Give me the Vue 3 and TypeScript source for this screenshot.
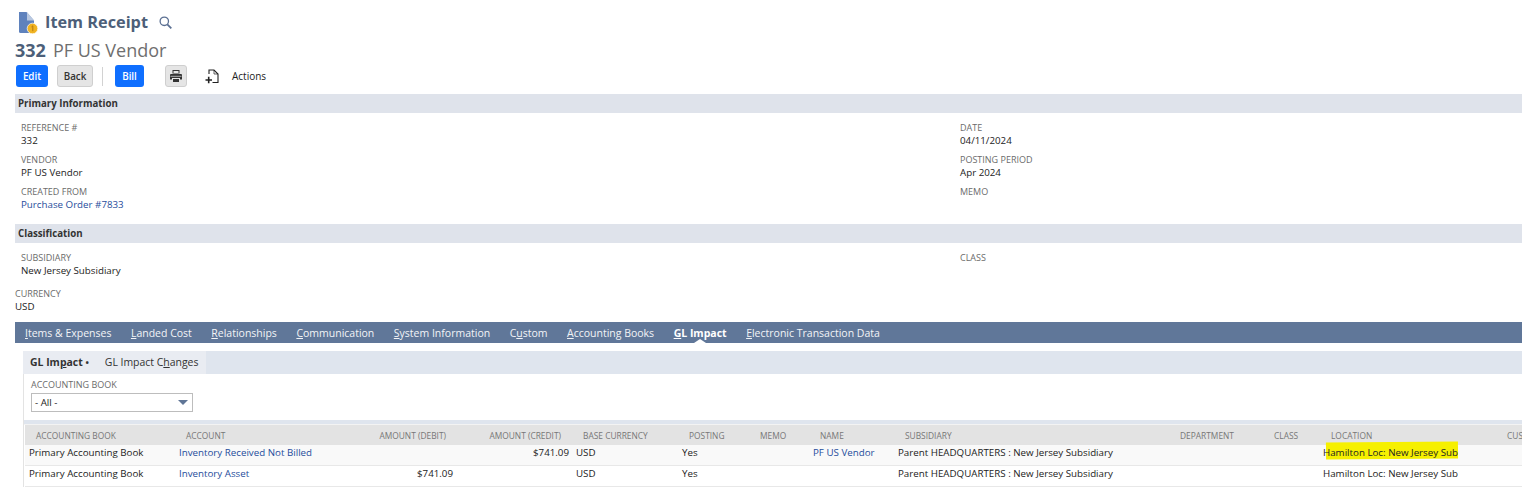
<script setup lang="ts">
interface Tab { before: string; key: string; after: string; active?: boolean }
const tabs: Tab[] = [
  { before: '', key: 'I', after: 'tems & Expenses' },
  { before: '', key: 'L', after: 'anded Cost' },
  { before: '', key: 'R', after: 'elationships' },
  { before: '', key: 'C', after: 'ommunication' },
  { before: '', key: 'S', after: 'ystem Information' },
  { before: 'C', key: 'u', after: 'stom' },
  { before: '', key: 'A', after: 'ccounting Books' },
  { before: '', key: 'G', after: 'L Impact', active: true },
  { before: '', key: 'E', after: 'lectronic Transaction Data' },
]
const headers = ['Accounting Book', 'Account', 'Amount (Debit)', 'Amount (Credit)', 'Base Currency', 'Posting', 'Memo', 'Name', 'Subsidiary', 'Department', 'Class', 'Location', 'Customer']
const rows = [
  { account: 'Inventory Received Not Billed', debit: '', credit: '$741.09', name: 'PF US Vendor', mark: true },
  { account: 'Inventory Asset', debit: '$741.09', credit: '', name: '', mark: false },
]
</script>

<template>
  <div class="page">
    <div class="title-row">
      <svg class="doc-icon" width="22" height="23" viewBox="0 0 22 23">
        <path d="M1 1h7.500L16 9.500V22H2.500Q1 22 1 20.500z" fill="#5f82bd" />
        <path d="M9 1l7 8.500H9z" fill="#b9c8e0" />
        <circle cx="14.500" cy="17.500" r="5.300" fill="#f0b323" stroke="#fff" stroke-width="0.700" />
        <path d="M14.800 14.800v5.400M13.500 15.900l1.300-1.100" stroke="#b57a10" stroke-width="1" fill="none" />
      </svg>
      <h1 class="title">Item Receipt</h1>
      <svg class="search" width="13" height="13" viewBox="0 0 13 13" fill="none" stroke="#5a6f92" stroke-width="1.300">
        <circle cx="5.300" cy="5.300" r="4.200" />
        <path d="M8.300 8.300L12.300 12.300" stroke-width="1.800" />
      </svg>
    </div>
    <div class="subtitle"><b>332</b><span>PF US Vendor</span></div>
    <div class="toolbar">
      <button class="btn primary edit">Edit</button>
      <button class="btn plain back">Back</button>
      <i class="divider"></i>
      <button class="btn primary bill">Bill</button>
      <button class="btn plain print" aria-label="Print">
        <svg width="12" height="12" viewBox="0 0 12 12">
          <path d="M2.500 0h7v3.500h-7z M3.500 1v2h5V1z" fill="#333" fill-rule="evenodd" />
          <path d="M1 4h10q1 0 1 1v4.500h-2V8H2v1.500H0V5q0-1 1-1z" fill="#333" />
          <path d="M3 9h6v3H3z" fill="#333" />
          <path d="M0.500 6.300h11" stroke="#e5e5e5" stroke-width="0.700" />
        </svg>
      </button>
      <svg class="add-doc" width="14" height="15" viewBox="0 0 14 15" fill="none" stroke="#222" stroke-width="1.100">
        <path d="M4 5V1h5l4 4v8.500H7.500" />
        <path d="M9 1v4h4" stroke-width="0.700" />
        <path d="M0.500 11h6.500M3.700 7.800v6.400" stroke-width="1.600" />
      </svg>
      <span class="actions">Actions</span>
    </div>

    <div class="section-bar">Primary Information</div>
    <div class="fields">
      <div class="col">
        <div class="field"><label>Reference #</label><div>332</div></div>
        <div class="field"><label>Vendor</label><div>PF US Vendor</div></div>
        <div class="field"><label>Created From</label><div class="link">Purchase Order #7833</div></div>
      </div>
      <div class="col">
        <div class="field"><label>Date</label><div>04/11/2024</div></div>
        <div class="field"><label>Posting Period</label><div>Apr 2024</div></div>
        <div class="field"><label>Memo</label></div>
      </div>
    </div>

    <div class="section-bar second">Classification</div>
    <div class="fields class-fields">
      <div class="col"><div class="field"><label>Subsidiary</label><div>New Jersey Subsidiary</div></div></div>
      <div class="col"><div class="field"><label>Class</label></div></div>
    </div>
    <div class="field currency"><label>Currency</label><div>USD</div></div>

    <nav class="tabs">
      <span v-for="t in tabs" :key="t.after" class="tab" :class="{ active: t.active }">{{ t.before }}<u>{{ t.key }}</u>{{ t.after }}</span>
    </nav>

    <div class="panel">
      <div class="subtabs">
        <div class="subtab-group">
          <span class="subtab active">GL Im<u>p</u>act <em>•</em></span>
          <span class="subtab">GL Impact C<u>h</u>anges</span>
        </div>
      </div>
      <div class="filter">
        <label>Accounting Book</label>
        <div class="select"><span>- All -</span><i class="caret"></i></div>
      </div>
      <div class="band"></div>
      <div class="table">
        <div class="tr head">
          <div v-for="(h, i) in headers" :key="h" class="th" :class="{ right: i === 2 || i === 3 }">{{ h }}</div>
        </div>
        <div v-for="(r, idx) in rows" :key="idx" class="tr row" :class="{ odd: idx === 0 }">
          <div class="td">Primary Accounting Book</div>
          <div class="td link">{{ r.account }}</div>
          <div class="td right">{{ r.debit }}</div>
          <div class="td right credit">{{ r.credit }}</div>
          <div class="td">USD</div>
          <div class="td">Yes</div>
          <div class="td"></div>
          <div class="td link">{{ r.name }}</div>
          <div class="td">Parent HEADQUARTERS : New Jersey Subsidiary</div>
          <div class="td"></div>
          <div class="td"></div>
          <div class="td loc"><i v-if="r.mark" class="marker"></i><span>Hamilton Loc: New Jersey Sub</span></div>
          <div class="td"></div>
        </div>
      </div>
    </div>
  </div>
</template>

<style>
html, body { margin: 0; overflow: hidden; background: #fff; }
</style>

<style scoped>
.page {
  width: 1522px;
  height: 487px;
  overflow: hidden;
  box-sizing: border-box;
  padding: 12px 0 0 15px;
  font-family: "Open Sans", "Noto Sans", sans-serif;
  font-size: 9.750px;
  color: #222;
}
.title-row { display: flex; align-items: center; height: 21px; padding-left: 3px; }
.doc-icon { flex: none; }
.title { margin: 0 0 0 5px; font-size: 16.300px; line-height: 21px; font-weight: 700; color: #4d5f79; }
.search { margin-left: 11px; }
.subtitle { display: flex; gap: 7px; height: 24px; margin-top: 5px; font-size: 18px; line-height: 24px; color: #6f6f6f; }
.subtitle b { color: #4d5f79; font-weight: 700; }
.toolbar { display: flex; align-items: center; height: 22px; margin-top: 3px; padding-left: 1px; }
.btn {
  box-sizing: border-box;
  height: 22px;
  padding: 0;
  border-radius: 3px;
  font: 600 9.800px "Open Sans", sans-serif;
  display: flex;
  align-items: center;
  justify-content: center;
}
.primary { background: #0f6fff; border: 0; color: #fff; }
.plain { background: #e5e5e5; border: 1px solid #cfcfcf; color: #333; }
.edit { width: 32px; }
.back { width: 36px; margin-left: 9px; }
.divider { width: 1px; height: 19px; margin-left: 9px; background: #d2d2d2; }
.bill { width: 29px; margin-left: 12px; }
.print { width: 22px; margin-left: 21px; }
.add-doc { margin-left: 18px; }
.actions { margin-left: 13px; font-size: 10px; font-weight: 500; color: #222; }

.section-bar {
  height: 19px;
  margin-top: 7px;
  padding-left: 3px;
  background: #dfe3eb;
  font-size: 9.700px;
  line-height: 19px;
  font-weight: 700;
  color: #333;
}
.section-bar.second { margin-top: 6px; }
.fields { display: grid; grid-template-columns: 939px 1fr; padding: 9px 0 0 6px; }
.field { height: 32px; line-height: 12px; }
.field label, .th, .filter label { text-transform: uppercase; color: #6b6b6b; }
.field label { display: block; font-size: 9px; }
.field div { color: #222; padding-top: 1px; }
.field div.link, .link { color: #1f4d9c; }
.class-fields .field { height: 31px; }
.currency { margin-top: 5px; height: 34px; }

.tabs {
  display: flex;
  gap: 19.500px;
  height: 21px;
  padding-left: 10px;
  background: #607799;
  color: #fff;
  font-size: 10.500px;
  line-height: 23px;
}
.tab { position: relative; white-space: nowrap; color: #f2f4f7; height: 21px; }
.tab.active { font-weight: 700; color: #fff; }
.tab.active::after {
  content: "";
  position: absolute;
  left: 50%;
  bottom: 0;
  margin-left: -6px;
  border: 6px solid transparent;
  border-top: 0;
  border-bottom: 4px solid #fff;
}

.panel { margin: 8px 0 0 8px; border-left: 1px solid #e3e3e3; }
.subtabs { height: 23px; margin-left: -1px; background: #dfe5ee; }
.subtab-group { display: inline-flex; gap: 16px; height: 23px; padding: 0 8px 0 7px; background: #e9ecf2; font-size: 10.450px; line-height: 23px; color: #333; }
.subtab.active { position: relative; font-weight: 700; }
.subtab.active em { font-style: normal; font-size: 9px; }
.filter { padding: 4px 0 0 7px; height: 42px; }
.filter label { display: block; font-size: 9px; line-height: 13px; }
.select {
  box-sizing: border-box;
  display: flex;
  align-items: center;
  justify-content: space-between;
  width: 162px;
  height: 19px;
  margin-top: 2px;
  padding: 0 4px 1px 3px;
  border: 1px solid #bdbdbd;
  color: #222;
}
.caret { border: 5px solid transparent; border-top: 5px solid #5f7596; border-bottom: 0; }
.band { box-sizing: border-box; height: 5px; background: #dfe5ee; border-bottom: 1px solid #f3f3f3; }
.table { margin-left: 1px; width: 1497px; }
.tr { display: grid; grid-template-columns: 150px 170px 112px 115px 106px 71px 60px 85px 275px 94px 57px 176px 120px; }
.head { height: 20px; background: #e3e3e3; }
.th { padding-left: 11px; font-size: 8.400px; line-height: 21px; white-space: nowrap; color: #777; }
.th.right { padding: 0 11px 0 0; text-align: right; }
.row { height: 21px; border-bottom: 1px solid #e8e8e8; box-sizing: border-box; background: #fff; }
.row.odd { background: #f9f9f9; }
.td { padding-left: 4px; line-height: 15px; white-space: nowrap; color: #222; }
.td.link { color: #1f4d9c; }
.td.right { padding: 0 4px 0 0; text-align: right; }
.td.credit { padding-right: 3px; }
.td.loc { position: relative; padding-left: 3px; }
.loc span { position: relative; }
.marker {
  position: absolute;
  left: 6px;
  top: -3px;
  width: 132px;
  height: 17px;
  background: #f6f000;
  transform: rotate(-0.4deg);
}
</style>
